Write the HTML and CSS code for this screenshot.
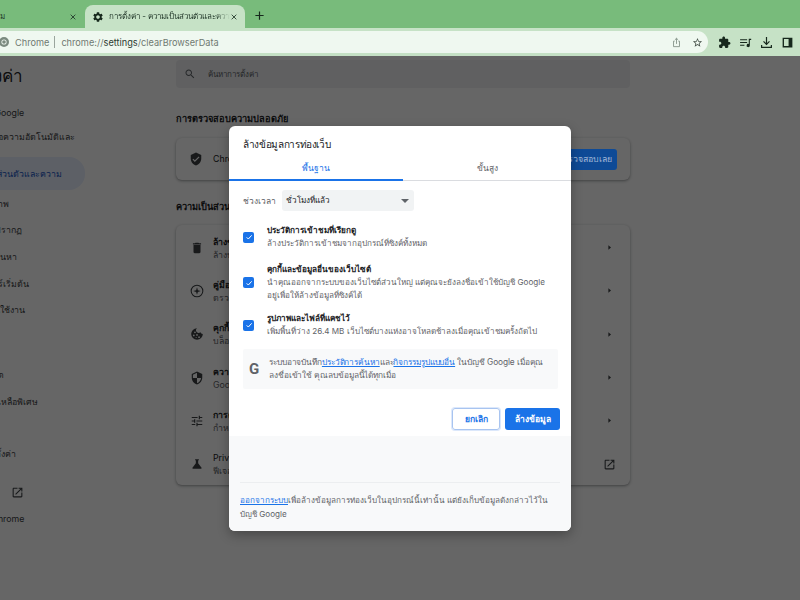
FILE: index.html
```html
<!DOCTYPE html>
<html lang="th">
<head>
<meta charset="utf-8">
<title>การตั้งค่า</title>
<link rel="stylesheet" href="styles.css">
</head>
<body>
<svg class="defs" width="0" height="0" aria-hidden="true">
  <symbol id="i-open" viewBox="0 0 24 24"><path d="M19 19H5V5h7V3H5c-1.11 0-2 .9-2 2v14c0 1.1.89 2 2 2h14c1.1 0 2-.9 2-2v-7h-2v7zM14 3v2h3.59l-9.83 9.83 1.41 1.41L19 6.41V10h2V3h-7z"/></symbol>
  <symbol id="i-arrow" viewBox="0 0 24 24"><path d="M9 6l7 6-7 6z"/></symbol>
  <symbol id="i-x" viewBox="0 0 24 24"><path d="M5 5l14 14M19 5L5 19" fill="none" stroke="currentColor" stroke-width="2.6"/></symbol>
  <symbol id="i-check" viewBox="0 0 24 24"><path d="M5 13l5 5L20 7" fill="none" stroke="#fff" stroke-width="3"/></symbol>
</svg>

<header class="chrome">
  <div class="tabstrip">
    <div class="tab">
      <span class="tab-title tab-title-clipped">ยินดีต้อนรับสู่การเริ่มต้นใช้งาน ม</span>
      <svg class="tab-x"><use href="#i-x"/></svg>
    </div>
    <div class="tab tab-active">
      <svg class="tab-gear" viewBox="0 0 24 24"><path d="M19.14 12.94c.04-.3.06-.61.06-.94 0-.32-.02-.64-.07-.94l2.03-1.58c.18-.14.23-.41.12-.61l-1.92-3.32c-.12-.22-.37-.29-.59-.22l-2.39.96c-.5-.38-1.03-.7-1.62-.94l-.36-2.54c-.04-.24-.24-.41-.48-.41h-3.84c-.24 0-.43.17-.47.41l-.36 2.54c-.59.24-1.13.57-1.62.94l-2.39-.96c-.22-.08-.47 0-.59.22L2.74 8.87c-.12.21-.08.47.12.61l2.03 1.58c-.05.3-.09.63-.09.94s.02.64.07.94l-2.03 1.58c-.18.14-.23.41-.12.61l1.92 3.32c.12.22.37.29.59.22l2.39-.96c.5.38 1.03.7 1.62.94l.36 2.54c.05.24.24.41.48.41h3.84c.24 0 .44-.17.47-.41l.36-2.54c.59-.24 1.13-.56 1.62-.94l2.39.96c.22.08.47 0 .59-.22l1.92-3.32c.12-.22.07-.47-.12-.61l-2.01-1.58zM12 15.6c-1.98 0-3.6-1.62-3.6-3.6s1.62-3.6 3.6-3.6 3.6 1.62 3.6 3.6-1.62 3.6-3.6 3.6z"/></svg>
      <span class="tab-title tab-title-fade">การตั้งค่า - ความเป็นส่วนตัวและความปลอดภัย</span>
      <svg class="tab-x"><use href="#i-x"/></svg>
    </div>
    <svg class="tab-plus" viewBox="0 0 24 24"><path d="M12 3v18M3 12h18" fill="none" stroke="currentColor" stroke-width="2.6"/></svg>
  </div>
  <div class="toolbar">
    <div class="omnibox">
      <svg class="omni-logo" viewBox="0 0 24 24"><circle cx="12" cy="12" r="10" fill="#7b8a7f"/><circle cx="12" cy="12" r="5.2" fill="#eef6ef"/><circle cx="12" cy="12" r="3.6" fill="#7b8a7f"/></svg>
      <span class="omni-site">Chrome</span>
      <span class="omni-sep"></span>
      <span class="omni-url">chrome://<b>settings</b>/clearBrowserData</span>
      <svg class="omni-ico" viewBox="0 0 24 24"><path d="M8 9H5.500v12h13V9H16M12 15V3M8.500 6.200L12 2.800l3.500 3.400" fill="none" stroke="#7c8a80" stroke-width="1.800"/></svg>
      <svg class="omni-ico" viewBox="0 0 24 24"><path fill="#47524a" d="M22 9.240l-7.190-.62L12 2 9.190 8.630 2 9.240l5.460 4.730L5.820 21 12 17.270 18.180 21l-1.630-7.030L22 9.240zM12 15.400l-3.760 2.270 1-4.280-3.320-2.880 4.380-.38L12 6.100l1.710 4.040 4.380.38-3.320 2.880 1 4.280L12 15.400z"/></svg>
    </div>
    <div class="tool-icons">
      <svg class="tool" viewBox="0 0 24 24"><path d="M20.500 11H19V7c0-1.100-.9-2-2-2h-4V3.500C13 2.120 11.880 1 10.500 1S8 2.120 8 3.500V5H4c-1.100 0-1.990.9-1.990 2v3.800H3.500c1.490 0 2.700 1.210 2.700 2.700s-1.210 2.700-2.700 2.700H2V20c0 1.100.9 2 2 2h3.800v-1.500c0-1.490 1.210-2.700 2.700-2.700 1.490 0 2.700 1.210 2.700 2.700V22H17c1.100 0 2-.9 2-2v-4h1.500c1.380 0 2.500-1.120 2.500-2.500S21.880 11 20.500 11z"/></svg>
      <svg class="tool" viewBox="0 0 24 24"><path d="M2 6h13v1.800H2zM2 11h13v1.800H2zM2 16h8v1.800H2zM18 5h4.500v2.200H20V17.500a3 3 0 1 1-2-2.800z"/></svg>
      <svg class="tool" viewBox="0 0 24 24"><path d="M12 2v13M6.500 10l5.500 5.500 5.500-5.500M3 16.500V21h18v-4.500" fill="none" stroke="currentColor" stroke-width="2.200"/></svg>
      <svg class="tool" viewBox="0 0 24 24"><path d="M3 3h18v18H3zM5.500 5.500v13H14v-13z" fill-rule="evenodd"/></svg>
    </div>
  </div>
</header>

<div class="page">
  <nav class="sidebar">
    <h1 class="side-title">การตั้งค่า</h1>
    <ul class="side-list">
      <li class="side-item side-google">คุณกับ Google</li>
      <li class="side-item side-auto">การป้อนข้อความอัตโนมัติและ</li>
      <li class="side-item side-active">ความเป็นส่วนตัวและความ</li>
      <li class="side-item">ประสิทธิภาพ</li>
      <li class="side-item">ลักษณะที่ปรากฏ</li>
      <li class="side-item">เครื่องมือค้นหา</li>
      <li class="side-item">เบราว์เซอร์เริ่มต้น</li>
      <li class="side-item">เมื่อเริ่มต้นใช้งาน</li>
      <li class="side-item side-gap-lg">ดาวน์โหลด</li>
      <li class="side-item">ความช่วยเหลือพิเศษ</li>
      <li class="side-item side-gap">รีเซ็ตการตั้งค่า</li>
      <li class="side-item side-ext">ส่วนขยาย<svg class="side-open"><use href="#i-open"/></svg></li>
      <li class="side-item">เกี่ยวกับ Chrome</li>
    </ul>
  </nav>
  <main class="content">
    <div class="search">
      <svg class="search-ico" viewBox="0 0 24 24"><path d="M15.500 14h-.79l-.28-.27C15.410 12.590 16 11.110 16 9.500 16 5.910 13.090 3 9.500 3S3 5.910 3 9.500 5.910 16 9.500 16c1.610 0 3.090-.59 4.230-1.570l.27.28v.79l5 4.990L20.490 19l-4.990-5zm-6 0C7.010 14 5 11.990 5 9.500S7.010 5 9.500 5 14 7.010 14 9.500 11.990 14 9.500 14z"/></svg>
      <span>ค้นหาการตั้งค่า</span>
    </div>
    <h2 class="sec-title sec-first">การตรวจสอบความปลอดภัย</h2>
    <section class="card card-check">
      <svg class="row-ico" viewBox="0 0 24 24"><path d="M12 1L3 5v6c0 5.550 3.840 10.740 9 12 5.160-1.260 9-6.450 9-12V5l-9-4zm-2 16l-4-4 1.410-1.410L10 14.170l6.590-6.590L18 9l-8 8z"/></svg>
      <span class="check-text">Chrome ช่วยให้คุณปลอดภัยจากการละเมิดข้อมูล</span>
      <span class="check-btn">ตรวจสอบเลย</span>
    </section>
    <h2 class="sec-title sec-second">ความเป็นส่วนตัวและความปลอดภัย</h2>
    <section class="card card-list">
      <div class="row">
        <svg class="row-ico" viewBox="0 0 24 24"><path d="M6 19c0 1.100.9 2 2 2h8c1.100 0 2-.9 2-2V7H6v12zM19 4h-3.500l-1-1h-5l-1 1H5v2h14V4z"/></svg>
        <div class="row-text"><b>ล้างข้อมูลการท่องเว็บ</b><span>ล้างประวัติการเข้าชม คุกกี้ แคช และอื่นๆ</span></div>
        <svg class="row-arrow"><use href="#i-arrow"/></svg>
      </div>
      <div class="row">
        <svg class="row-ico" viewBox="0 0 24 24"><circle cx="12" cy="12" r="10" fill="none" stroke="currentColor" stroke-width="1.800"/><path d="M12 5.500l1.500 5 5 1.500-5 1.500-1.500 5-1.500-5-5-1.500 5-1.500z"/></svg>
        <div class="row-text"><b>คู่มือความเป็นส่วนตัว</b><span>ตรวจสอบการควบคุมความเป็นส่วนตัว</span></div>
        <svg class="row-arrow"><use href="#i-arrow"/></svg>
      </div>
      <div class="row">
        <svg class="row-ico" viewBox="0 0 24 24"><path fill-rule="evenodd" d="M12 2a10 10 0 1 0 10 10 4 4 0 0 1-4-3 4 4 0 0 1-6-7zM8.500 7.500a1.500 1.500 0 1 1 0 3 1.500 1.500 0 0 1 0-3zM6.500 13a1.500 1.500 0 1 1 0 3 1.500 1.500 0 0 1 0-3zM12 12a1.500 1.500 0 1 1 0 3 1.500 1.500 0 0 1 0-3zM15.500 16a1.500 1.500 0 1 1 0 3 1.500 1.500 0 0 1 0-3zM10.500 17a1 1 0 1 1 0 2 1 1 0 0 1 0-2z"/></svg>
        <div class="row-text"><b>คุกกี้และข้อมูลอื่นๆ ของเว็บไซต์</b><span>บล็อกคุกกี้ของบุคคลที่สามในโหมดไม่ระบุตัวตน</span></div>
        <svg class="row-arrow"><use href="#i-arrow"/></svg>
      </div>
      <div class="row">
        <svg class="row-ico" viewBox="0 0 24 24"><path d="M12 1L3 5v6c0 5.550 3.840 10.740 9 12 5.160-1.260 9-6.450 9-12V5l-9-4zm0 10.990h7c-.53 4.120-3.280 7.790-7 8.940V12H5V6.300l7-3.110v8.800z"/></svg>
        <div class="row-text"><b>ความปลอดภัย</b><span>Google Safe Browsing และการตั้งค่าความปลอดภัยอื่นๆ</span></div>
        <svg class="row-arrow"><use href="#i-arrow"/></svg>
      </div>
      <div class="row">
        <svg class="row-ico" viewBox="0 0 24 24"><path d="M3 17v2h6v-2H3zM3 5v2h10V5H3zm10 16v-2h8v-2h-8v-2h-2v6h2zM7 9v2H3v2h4v2h2V9H7zm14 4v-2H11v2h10zm-6-4h2V7h4V5h-4V3h-2v6z"/></svg>
        <div class="row-text"><b>การตั้งค่าเว็บไซต์</b><span>กำหนดข้อมูลที่เว็บไซต์ใช้และแสดงได้</span></div>
        <svg class="row-arrow"><use href="#i-arrow"/></svg>
      </div>
      <div class="row">
        <svg class="row-ico" viewBox="0 0 24 24"><path d="M19.800 18.400L14 10.670V6.500l1.350-1.690c.26-.33.03-.81-.39-.81H9.040c-.42 0-.65.48-.39.81L10 6.500v4.170L4.200 18.400c-.49.66-.02 1.600.8 1.600h14c.82 0 1.290-.94.8-1.600z"/></svg>
        <div class="row-text"><b class="row-plain">Privacy Sandbox</b><span>ฟีเจอร์ทดลองเปิดอยู่</span></div>
        <svg class="row-open"><use href="#i-open"/></svg>
      </div>
    </section>
  </main>
</div>

<div class="scrim"></div>

<div class="dialog" role="dialog">
  <div class="dlg-main">
    <h3 class="dlg-title">ล้างข้อมูลการท่องเว็บ</h3>
    <div class="dlg-tabs">
      <div class="dlg-tab dlg-tab-on">พื้นฐาน</div>
      <div class="dlg-tab">ขั้นสูง</div>
    </div>
    <div class="dlg-body">
      <div class="range">
        <span class="range-label">ช่วงเวลา</span>
        <div class="range-select"><span>ชั่วโมงที่แล้ว</span><i class="caret"></i></div>
      </div>
      <div class="opt opt-1">
        <span class="box"><svg><use href="#i-check"/></svg></span>
        <div class="opt-text"><b>ประวัติการเข้าชมที่เรียกดู</b><p>ล้างประวัติการเข้าชมจากอุปกรณ์ที่ซิงค์ทั้งหมด</p></div>
      </div>
      <div class="opt opt-2">
        <span class="box"><svg><use href="#i-check"/></svg></span>
        <div class="opt-text"><b>คุกกี้และข้อมูลอื่นของเว็บไซต์</b><p>นำคุณออกจากระบบของเว็บไซต์ส่วนใหญ่ แต่คุณจะยังลงชื่อเข้าใช้บัญชี Google อยู่เพื่อให้ล้างข้อมูลที่ซิงค์ได้</p></div>
      </div>
      <div class="opt opt-3">
        <span class="box"><svg><use href="#i-check"/></svg></span>
        <div class="opt-text"><b>รูปภาพและไฟล์ที่แคชไว้</b><p>เพิ่มพื้นที่ว่าง 26.4 MB เว็บไซต์บางแห่งอาจโหลดช้าลงเมื่อคุณเข้าชมครั้งถัดไป</p></div>
      </div>
      <div class="notice">
        <span class="g">G</span>
        <p>ระบบอาจบันทึก<a>ประวัติการค้นหา</a>และ<a>กิจกรรมรูปแบบอื่น</a> ในบัญชี Google เมื่อคุณลงชื่อเข้าใช้ คุณลบข้อมูลนี้ได้ทุกเมื่อ</p>
      </div>
      <div class="actions">
        <span class="btn btn-cancel">ยกเลิก</span>
        <span class="btn btn-ok">ล้างข้อมูล</span>
      </div>
    </div>
  </div>
  <div class="dlg-foot">
    <p><a>ออกจากระบบ</a>เพื่อล้างข้อมูลการท่องเว็บในอุปกรณ์นี้เท่านั้น แต่ยังเก็บข้อมูลดังกล่าวไว้ในบัญชี Google</p>
  </div>
</div>
</body>
</html>
```
FILE: styles.css
```css
* { box-sizing: border-box; }
html, body { margin: 0; height: 100%; overflow: hidden; }
body {
  position: relative;
  width: 800px;
  height: 600px;
  background: #fff;
  font-family: "Inter", "Noto Sans", "Liberation Sans", "DejaVu Sans", sans-serif;
  font-size: 8.8px;
  color: #202124;
}
.defs { position: absolute; }
p, h1, h2, h3, ul { margin: 0; padding: 0; }
ul { list-style: none; }

/* Browser chrome */
.chrome { height: 56px; }
.tabstrip { height: 28px; background: #78bb7b; display: flex; align-items: flex-end; }
.tab { height: 23px; width: 84px; display: flex; align-items: center; justify-content: flex-end; padding-right: 7px; color: #22382a; overflow: hidden; position: relative; }
.tab-title { font-size: 8px; white-space: nowrap; }
.tab-title-clipped { position: absolute; right: 79px; }
.tab-x { width: 8px; height: 8px; flex: none; color: #22382a; }
.tab-active { width: 160px; margin-left: 1px; background: #c6e2c6; border-radius: 8px 8px 0 0; justify-content: flex-start; padding: 0 7px; }
.tab-gear { width: 12px; height: 12px; flex: none; fill: #16281c; margin-right: 5px; }
.tab-title-fade { flex: 1; overflow: hidden; -webkit-mask-image: linear-gradient(90deg, #000 88%, transparent); mask-image: linear-gradient(90deg, #000 88%, transparent); }
.tab-plus { width: 11px; height: 11px; margin: 0 0 7px 9px; color: #16281c; flex: none; }

.toolbar { height: 28px; background: #c6e2c6; display: flex; align-items: center; }
.omnibox { width: 716px; height: 22px; margin-left: -8px; background: #eff8f0; border-radius: 0 11px 11px 0; display: flex; align-items: center; font-size: 9.2px; color: #6f7a72; padding-left: 6px; }
.omni-logo { width: 12px; height: 12px; flex: none; margin-right: 5px; }
.omni-sep { width: 1px; height: 12px; background: #9aa59d; margin: 0 6px 0 5px; }
.omni-url { flex: 1; }
.omni-url b { font-weight: 400; color: #2c3a31; }
.omni-ico { width: 11px; height: 11px; flex: none; margin-right: 10px; }
.omni-ico:last-child { margin-right: 5px; }
.tool-icons { display: flex; gap: 8px; margin-left: 10px; }
.tool { width: 13px; height: 13px; flex: none; fill: #16281c; color: #16281c; }

/* Settings page */
.page { height: 544px; display: flex; position: relative; }
.sidebar { width: 176px; flex: none; overflow: hidden; }
.side-title { font-size: 17px; font-weight: 400; margin: 6px 0 0 -46px; line-height: 28px; white-space: nowrap; }
.side-list { margin: 10px 0 0 -40px; color: #3c4043; }
.side-item { line-height: 14px; height: 26.7px; white-space: nowrap; display: flex; align-items: center; }
.side-google { margin-left: 7px; }
.side-auto { margin-top: -2.7px; }
.side-active { margin-top: 6.65px; color: #1a56c4; height: 33px; position: relative; }
.side-active::after { content: ""; position: absolute; z-index: -1; left: -60px; width: 185px; top: 0; bottom: 0; background: #e8f0fe; border-radius: 0 16px 16px 0; }
.side-gap-lg { margin-top: 38.2px; }
.side-gap { margin-top: 25.6px; }
.side-ext { margin-top: 11.3px; }
.side-open { width: 13px; height: 13px; margin-left: 14px; fill: #3c4043; }

.content { width: 454px; flex: none; }
.search { height: 28px; margin-top: 4px; background: #eff1f3; border-radius: 4px; display: flex; align-items: center; padding-left: 8px; color: #5f6368; gap: 12px; font-size: 8px; }
.search-ico { width: 12px; height: 12px; fill: #5f6368; }
.sec-title { font-size: 9.2px; font-weight: 600; line-height: 14px; white-space: nowrap; }
.sec-first { margin-top: 24px; }
.sec-second { margin-top: 20px; }
.card { background: #fff; border-radius: 6px; box-shadow: 0 1px 2px rgba(60,64,67,.3), 0 1px 3px 1px rgba(60,64,67,.15); }
.card-check { height: 42px; margin-top: 12px; display: flex; align-items: center; padding: 0 13px; }
.check-text { flex: 1; margin-left: 10px; white-space: nowrap; overflow: hidden; }
.check-btn { width: 60px; height: 21px; background: #0e4a96; color: #9fb6d6; border-radius: 3px; display: flex; align-items: center; justify-content: center; flex: none; position: relative; z-index: 1; }
.row-ico { width: 14px; height: 14px; fill: #3c4043; color: #3c4043; flex: none; }
.card-list { height: 260px; margin-top: 11px; padding-top: 1px; }
.row { height: 43.3px; display: flex; align-items: center; padding: 0 16px 0 14px; }
.row .row-ico { margin-right: 9px; }
.row-text { flex: 1; display: flex; flex-direction: column; line-height: 13px; white-space: nowrap; overflow: hidden; }
.row-text b { font-weight: 600; }
.row-text b.row-plain { font-weight: 400; }
.row-text span { color: #5f6368; }
.row-arrow { width: 9px; height: 9px; flex: none; fill: #3c4043; }
.row-open { width: 13px; height: 13px; flex: none; fill: #3c4043; margin-right: -2px; }

/* Scrim and dialog */
.scrim { position: absolute; left: 0; right: 0; top: 56px; bottom: 0; background: rgba(0,0,0,.6); }
.dialog { position: absolute; z-index: 2; left: 229px; top: 126px; width: 342px; height: 405px; background: #fff; border-radius: 6px; display: flex; flex-direction: column; overflow: hidden; box-shadow: 0 4px 12px rgba(0,0,0,.3); }
.dlg-main { height: 310px; flex: none; }
.dlg-title { font-size: 10px; font-weight: 500; letter-spacing: -.35px; line-height: 16px; padding: 10px 14px 0; }
.dlg-tabs { display: flex; height: 29px; border-bottom: 1px solid #dadce0; }
.dlg-tab { flex: 1; display: flex; align-items: center; justify-content: center; font-size: 8.5px; color: #5f6368; padding-top: 4px; }
.dlg-tab-on { flex: none; width: 174px; color: #1a73e8; border-bottom: 2px solid #1a73e8; margin-bottom: -1px; }
.dlg-body { padding: 9px 11px 0 14px; }
.range { display: flex; align-items: center; height: 21px; }
.range-label { width: 39px; color: #5f6368; font-size: 8.5px; }
.range-select { width: 132px; height: 21px; background: #f1f3f4; border-radius: 3px; display: flex; align-items: center; justify-content: space-between; padding: 0 5px 0 4px; font-size: 8.2px; font-weight: 500; color: #202124; }
.caret { border: 4px solid transparent; border-top: 4px solid #5f6368; border-bottom: 0; }
.opt { display: flex; align-items: center; }
.opt-1 { margin-top: 13px; }
.opt-2 { margin-top: 13px; }
.opt-3 { margin-top: 10px; }
.box { width: 11px; height: 11px; background: #1a73e8; border-radius: 2px; margin-right: 13px; flex: none; display: flex; align-items: center; justify-content: center; }
.box svg { width: 8px; height: 8px; }
.opt-text { line-height: 13px; width: 285px; }
.opt-text b { font-weight: 600; font-size: 8.2px; display: block; }
.opt-text p { color: #5f6368; font-size: 8.1px; }
.notice { margin-top: 11px; height: 40px; background: #f8f9fa; border-radius: 2px; display: flex; align-items: center; padding: 0 8px 0 1px; width: 315px; }
.g { width: 20px; margin-right: 5px; flex: none; font-family: "Roboto", "Liberation Sans", sans-serif; font-weight: 700; font-size: 15px; color: #5f6368; text-align: center; }
.notice p { font-size: 8.3px; letter-spacing: -.1px; line-height: 13px; color: #5f6368; }
a { color: #1a73e8; text-decoration: underline; }
.actions { display: flex; justify-content: flex-end; gap: 5px; margin-top: 19px; }
.btn { height: 22px; display: flex; align-items: center; justify-content: center; border-radius: 3px; font-size: 8.5px; font-weight: 600; }
.btn-cancel { width: 48px; color: #1a73e8; border: 1px solid #a8c4f0; box-shadow: 0 0 0 1px #dce8fb; }
.btn-ok { width: 55px; background: #1a73e8; color: #fff; }
.dlg-foot { flex: 1; background: #f8f9fa; display: flex; flex-direction: column; justify-content: flex-end; padding: 0 20px 10px 11px; color: #5f6368; font-size: 8.1px; line-height: 14px; }
.dlg-foot p { border-top: 1px solid #eceef0; padding-top: 10px; margin-right: -9px; padding-right: 9px; }
```
